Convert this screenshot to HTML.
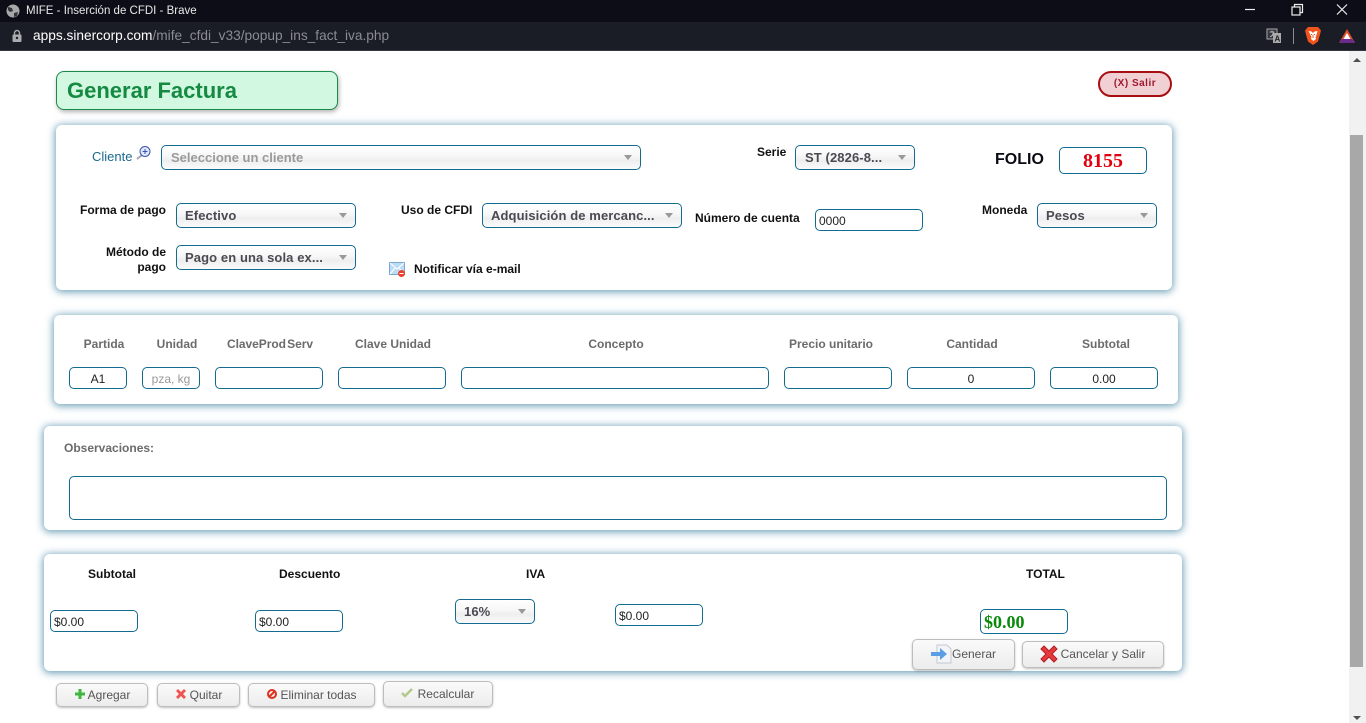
<!DOCTYPE html>
<html lang="es"><head><meta charset="utf-8"><title>MIFE - Inserción de CFDI - Brave</title>
<style>
html,body{margin:0;padding:0;width:1366px;height:723px;overflow:hidden;background:#fff;font-family:"Liberation Sans",sans-serif}
div,span{position:absolute;box-sizing:border-box;white-space:nowrap}
.panel{background:#fff;border-radius:6px;box-shadow:0 1px 8px 1px rgba(70,135,165,.8)}
.l{font-size:12px;font-weight:bold;color:#111;line-height:14px}
.h{font-size:12px;font-weight:bold;color:#6b6b6b;line-height:14px;text-align:center}
.i{height:22px;border:1px solid #146b90;border-radius:5px;background:#fff;font-size:12px;color:#222;line-height:21px;padding-left:3px;padding-top:1px}
.c{text-align:center;padding-left:0}
.s{height:25px;border:1px solid #146b90;border-radius:5px;background:linear-gradient(#fff 0,#f8f8f8 40%,#eee 62%,#fafafa 100%);font-size:13px;font-weight:bold;color:#4a4a52;line-height:23px;padding-left:8px;letter-spacing:.1px}
.s:after{content:"";position:absolute;right:8px;top:9px;border-left:4px solid transparent;border-right:4px solid transparent;border-top:5px solid #999}
.b{border:1px solid #bdbdbd;border-radius:5px;background:linear-gradient(#fafafa,#ececec);box-shadow:0 1px 2px rgba(0,0,0,.25);font-size:12px;color:#555;text-align:center}
</style></head><body>
<div style="left:0;top:0;width:1366px;height:22px;background:#0c0d16"></div>
<svg style="position:absolute;left:6px;top:4px" width="14" height="14"><circle cx="7" cy="7" r="6.5" fill="#a8a8a8"/><path d="M2 3l4 1 1 3-3 1-2-2zM8 9l4-1-1 4-3 1z" fill="#33343c"/></svg>
<div style="left:26px;top:3px;font-size:11.500px;line-height:16px;color:#e8e8e8">MIFE - Inserción de CFDI - Brave</div>
<svg style="position:absolute;left:1240px;top:0" width="126" height="22" fill="none" stroke="#eee" stroke-width="1.2"><path d="M5 9.5h10"/><rect x="52" y="7" width="8" height="8"/><path d="M54.500 7V4.500h8v8H60"/><path d="M97 4.500l10 10M107 4.500l-10 10"/></svg>
<div style="left:0;top:22px;width:1366px;height:29px;background:#1a1d26"></div>
<div style="left:0;top:50px;width:1366px;height:1px;background:#33363f"></div>
<svg style="position:absolute;left:11px;top:29px" width="12" height="14"><rect x="1.500" y="5.500" width="9" height="7.500" rx="1" fill="#a9abb0"/><path d="M3.500 6V4a2.500 2.500 0 0 1 5 0v2" fill="none" stroke="#a9abb0" stroke-width="1.400"/><circle cx="6" cy="9" r="1.200" fill="#1a1d26"/></svg>
<div style="left:33px;top:27px;font-size:13.700px;line-height:18px;color:#fff">apps.sinercorp.com<span style="position:static;color:#8a8c92">/mife_cfdi_v33/popup_ins_fact_iva.php</span></div>
<svg style="position:absolute;left:1266px;top:27px" width="18" height="18"><rect x="1" y="2" width="10" height="10" fill="#33363f" stroke="#aaa"/><path d="M3.500 5h5M6 3.500V5M4 9.500c2 0 3-2 3.500-4.500" stroke="#bbb" fill="none"/><rect x="7" y="6" width="8" height="10" fill="#aaa"/><text x="8.500" y="14.500" font-size="8" font-weight="bold" fill="#222" font-family="Liberation Sans">A</text></svg>
<div style="left:1293px;top:28px;width:1px;height:16px;background:#8a8c92"></div>
<svg style="position:absolute;left:1304px;top:26px" width="18" height="20"><path d="M4 1h10l3 3.500-1 4-2 7-5 3.500-5-3.500-2-7-1-4z" fill="#f1531c"/><path d="M4.500 5l3 .5L9 7l1.500-1.500 3-.5-1 4-1 2 .5 2-2.500 2-2.500-2 .5-2-1-2z" fill="#fff"/><path d="M7 8.500h1.200M9.800 8.500H11M9 9v3" stroke="#f1531c"/></svg>
<svg style="position:absolute;left:1338px;top:28px" width="18" height="16"><path d="M9 1l8 14H1z" fill="#e0502a"/><path d="M1 15l3-4h10l3 4z" fill="#6b2a8e"/><path d="M9 5l3.500 6h-7z" fill="#fff"/></svg>

<div style="left:1349px;top:51px;width:17px;height:672px;background:#f1f1f1"></div>
<div style="left:1350px;top:135px;width:13px;height:532px;background:#a8a8a8"></div>
<div style="left:1353px;top:58px;border-left:4px solid transparent;border-right:4px solid transparent;border-bottom:4px solid #505050"></div>
<div style="left:1353px;top:716px;border-left:4px solid transparent;border-right:4px solid transparent;border-top:4px solid #505050"></div>

<div style="left:56px;top:71px;width:282px;height:39px;background:#d3f8e2;border:1px solid #1a8a4a;border-radius:8px;box-shadow:1px 2px 5px rgba(0,0,0,.3);font-size:22px;font-weight:bold;color:#158a42;line-height:37px;padding-left:10px">Generar Factura</div>
<div style="left:1098px;top:71px;width:74px;height:26px;background:#f0d0d2;border:2px solid #a80f12;border-radius:13px;font-size:10px;font-weight:bold;color:#a01830;line-height:21px;text-align:center;letter-spacing:.5px">(X) Salir</div>

<div class="panel" style="left:56px;top:125px;width:1116px;height:165px"></div>
<div style="left:92px;top:150px;font-size:13px;line-height:14px;color:#1c6a90">Cliente</div>
<svg style="position:absolute;left:135px;top:145px" width="17" height="16"><path d="M2 14l5-4" stroke="#a8a8a8" stroke-width="2"/><circle cx="10" cy="6.500" r="5" fill="#dfe9fb" stroke="#3a55b0"/><path d="M7.500 6.500h5M10 4v5" stroke="#3a55b0"/></svg>
<div class="s" style="left:161px;top:145px;width:480px;color:#9a9a9a;padding-left:9px;letter-spacing:0">Seleccione un cliente</div>
<div class="l" style="left:757px;top:145px">Serie</div>
<div class="s" style="left:795px;top:145px;width:120px;padding-left:9px">ST (2826-8...</div>
<div style="left:995px;top:151px;font-size:16px;font-weight:bold;line-height:18px;color:#0a0a14">FOLIO</div>
<div class="i c" style="left:1059px;top:147px;width:88px;height:27px;padding-top:0;font:bold 20px/26px 'Liberation Serif',serif;color:#e00010">8155</div>

<div class="l" style="left:80px;top:203px">Forma de pago</div>
<div class="s" style="left:176px;top:203px;width:180px">Efectivo</div>
<div class="l" style="left:401px;top:203px">Uso de CFDI</div>
<div class="s" style="left:482px;top:203px;width:200px">Adquisición de mercanc...</div>
<div class="l" style="left:695px;top:211px">Número de cuenta</div>
<div class="i" style="left:815px;top:209px;width:108px">0000</div>
<div class="l" style="left:982px;top:203px">Moneda</div>
<div class="s" style="left:1037px;top:203px;width:120px">Pesos</div>
<div class="l" style="left:80px;top:245px;width:86px;text-align:right;line-height:15px;white-space:normal">Método de pago</div>
<div class="s" style="left:176px;top:245px;width:180px">Pago en una sola ex...</div>
<svg style="position:absolute;left:389px;top:262px" width="18" height="16"><rect x=".5" y=".5" width="15" height="12" fill="#bcdcf6" stroke="#7aa7d0"/><path d="M1 1l7 6 7-6M1 12l5-6M15 12l-5-6" stroke="#fff" fill="none"/><circle cx="12.500" cy="11.500" r="3.500" fill="#e8402a"/><path d="M10.500 11.500h4" stroke="#fff"/></svg>
<div class="l" style="left:414px;top:262px">Notificar vía e-mail</div>

<div class="panel" style="left:54px;top:315px;width:1124px;height:89px"></div>
<div class="h" style="left:69px;top:337px;width:70px">Partida</div>
<div class="h" style="left:142px;top:337px;width:70px">Unidad</div>
<div class="h" style="left:215px;top:337px;width:110px;word-spacing:-2px;letter-spacing:-.05px">ClaveProd Serv</div>
<div class="h" style="left:338px;top:337px;width:110px">Clave Unidad</div>
<div class="h" style="left:461px;top:337px;width:310px">Concepto</div>
<div class="h" style="left:776px;top:337px;width:110px">Precio unitario</div>
<div class="h" style="left:907px;top:337px;width:130px">Cantidad</div>
<div class="h" style="left:1051px;top:337px;width:110px">Subtotal</div>
<div class="i c" style="left:69px;top:367px;width:58px">A1</div>
<div class="i c" style="left:142px;top:367px;width:58px;color:#999">pza, kg</div>
<div class="i" style="left:215px;top:367px;width:108px"></div>
<div class="i" style="left:338px;top:367px;width:108px"></div>
<div class="i" style="left:461px;top:367px;width:308px"></div>
<div class="i" style="left:784px;top:367px;width:108px"></div>
<div class="i c" style="left:907px;top:367px;width:128px">0</div>
<div class="i c" style="left:1050px;top:367px;width:108px">0.00</div>

<div class="panel" style="left:44px;top:426px;width:1138px;height:104px"></div>
<div class="h" style="left:64px;top:441px">Observaciones:</div>
<div class="i" style="left:69px;top:476px;width:1098px;height:44px"></div>

<div class="panel" style="left:44px;top:554px;width:1138px;height:117px"></div>
<div class="l" style="left:88px;top:567px;font-size:12px">Subtotal</div>
<div class="l" style="left:279px;top:567px">Descuento</div>
<div class="l" style="left:526px;top:567px">IVA</div>
<div class="l" style="left:1026px;top:567px">TOTAL</div>
<div class="i" style="left:50px;top:610px;width:88px">$0.00</div>
<div class="i" style="left:255px;top:610px;width:88px">$0.00</div>
<div class="s" style="left:455px;top:599px;width:80px">16%</div>
<div class="i" style="left:615px;top:604px;width:88px">$0.00</div>
<div class="i" style="left:980px;top:609px;width:88px;height:25px;padding-top:0;font:bold 18px/24px 'Liberation Serif',serif;color:#0a8a0a">$0.00</div>

<div class="b" style="left:912px;top:639px;width:103px;height:31px;line-height:29px;padding-left:21px">Generar</div>
<svg style="position:absolute;left:930px;top:644px" width="24" height="20"><path d="M7 1h10l4 4v14H7z" fill="#f2f4f7" stroke="#c4c8ce"/><path d="M1 8h9V4l7 6-7 6v-4H1z" fill="#5a9ee6"/></svg>
<div class="b" style="left:1022px;top:641px;width:142px;height:27px;line-height:24px;padding-left:20px">Cancelar y Salir</div>
<svg style="position:absolute;left:1040px;top:645px" width="18" height="18"><path d="M1 4l3-3 5 5 5-5 3 3-5 5 5 5-3 3-5-5-5 5-3-3 5-5z" fill="#e63a3a" stroke="#b01c28"/></svg>

<div class="b" style="left:56px;top:683px;width:92px;height:24px;line-height:23px;padding-left:14px">Agregar</div>
<svg style="position:absolute;left:75px;top:689px" width="10" height="10"><path d="M3.500 0h3v3.500H10v3H6.500V10h-3V6.500H0v-3h3.500z" fill="#3fb63f"/></svg>
<div class="b" style="left:157px;top:683px;width:83px;height:24px;line-height:23px;padding-left:15px">Quitar</div>
<svg style="position:absolute;left:176px;top:689px" width="10" height="10"><path d="M0 2l2-2 3 3 3-3 2 2-3 3 3 3-2 2-3-3-3 3-2-2 3-3z" fill="#ef5350"/></svg>
<div class="b" style="left:248px;top:683px;width:127px;height:24px;line-height:23px;padding-left:14px">Eliminar todas</div>
<svg style="position:absolute;left:267px;top:689px" width="10" height="10"><circle cx="5" cy="5" r="4" fill="none" stroke="#e0301e" stroke-width="2"/><path d="M2 8l6-6" stroke="#e0301e" stroke-width="2"/></svg>
<div class="b" style="left:383px;top:681px;width:110px;height:26px;line-height:25px;padding-left:16px">Recalcular</div>
<svg style="position:absolute;left:401px;top:688px" width="12" height="10"><path d="M1 5l3 3 7-7" fill="none" stroke="#b4c88a" stroke-width="2.500"/></svg>
</body></html>
